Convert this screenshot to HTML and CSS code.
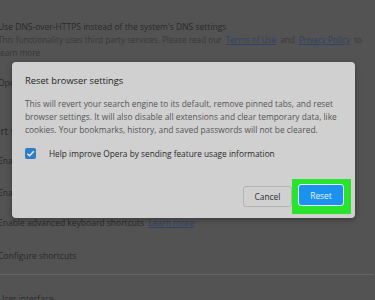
FILE: index.html
```html
<!DOCTYPE html>
<html lang="en">
<head>
    <meta charset="UTF-8" />
    <title>Reset browser settings</title>
    <link rel="stylesheet" href="styles.css">
</head>
<body>
    <main class="settings">
        <div class="dns">
            <div>Use DNS-over-HTTPS instead of the system's DNS settings</div>
            <div class="sub">This functionality uses third party services. Please read our <a href="#">Terms of Use</a> and <a href="#">Privacy Policy</a> to <br>learn more</div>
        </div>
        <div class="row tall">Open page with fast forward</div>
        <div class="row shift">Alert when closing multiple tabs</div>
        <div class="row r32">Enable trackpad gestures</div>
        <div class="row">Enable mouse gestures</div>
        <div class="row r33">Enable advanced keyboard shortcuts <a href="#">Learn more</a></div>
        <div class="row r33">Configure shortcuts</div>
        <div class="row section">User interface</div>
    </main>

    <div class="overlay">
        <div class="dialog">
            <h2>Reset browser settings</h2>
            <p>This will revert your search engine to its default, remove pinned tabs, and reset browser settings. It will also disable all extensions and clear temporary data, like cookies. Your bookmarks, history, and saved passwords will not be cleared.</p>
            <label class="check">
                <span class="box">
                    <svg width="9" height="9" viewBox="0 0 10 10"><path d="M1.5 5.2 L4 7.5 L8.7 2.5" fill="none" stroke="#e8eef6" stroke-width="1.6"/></svg>
                </span>
                Help improve Opera by sending feature usage information
            </label>
            <div class="actions">
                <button class="cancel">Cancel</button>
                <span class="highlight"><button class="reset">Reset</button></span>
            </div>
        </div>
    </div>
</body>
</html>
```

FILE: styles.css
```css
html, body {
    margin: 0;
    height: 300px;
    overflow: hidden;
}

body {
    font-family: "Open Sans", "Noto Sans", sans-serif;
    background: #535353;
    color: #2a2a2a;
    font-size: 8.5px;
}

.settings {
    width: 376px;
    height: 300px;
    overflow: hidden;
    padding-top: 20px;
    margin-left: -2px;
}

.dns {
    line-height: 13px;
}

    .dns .sub {
        color: #383838;
        font-size: 8.2px;
        white-space: nowrap;
    }

.settings a {
    color: #2d4264;
    margin: 0 2px;
}

.row {
    height: 30px;
    line-height: 30px;
    white-space: nowrap;
}

.tall {
    margin-top: 9px;
    height: 48px;
}

.shift {
    margin-left: -12px;
    font-size: 10px;
}

.r32 {
    height: 32px;
}

.r33 {
    height: 33px;
}

.section {
    border-top: 1px solid #636363;
    line-height: 48px;
}

.overlay {
    position: absolute;
    top: 62px;
    left: 12px;
}

.dialog {
    width: 343px;
    height: 156px;
    box-sizing: border-box;
    background: #d0d0d0;
    border-radius: 4px;
    padding: 12px 13px 0 13px;
    box-shadow: 0 2px 6px rgba(0, 0, 0, 0.3);
}

    .dialog h2 {
        margin: 0 0 10px 0;
        font-size: 9.3px;
        line-height: 13px;
        font-weight: normal;
        color: #1e1e1e;
    }

    .dialog p {
        margin: 0 0 11px 0;
        font-size: 8.4px;
        line-height: 13px;
        color: #555;
    }

.check {
    display: flex;
    align-items: center;
    gap: 13px;
    height: 13px;
    font-size: 8.3px;
    color: #2a2a2a;
}

.box {
    width: 11px;
    height: 11px;
    background: #2f7dc4;
    border-radius: 2px;
    display: flex;
    align-items: center;
    justify-content: center;
}

.actions {
    display: flex;
    justify-content: flex-end;
    align-items: center;
    margin-top: 19px;
    margin-right: -9px;
}

    .actions button {
        font-family: inherit;
        font-size: 8.4px;
        border-radius: 3px;
        padding: 0;
    }

.cancel {
    width: 49px;
    height: 21px;
    background: #d0d0d0;
    border: 1px solid #b4b4b4;
    color: #2e2e2e;
}

.highlight {
    display: flex;
    padding: 5px 7px 8px 6px;
    background: #29e32c;
}

.reset {
    width: 46px;
    height: 22px;
    background: #1a92ee;
    border: 1px solid #e6f4ff;
    color: #eaf3ff;
}
```
